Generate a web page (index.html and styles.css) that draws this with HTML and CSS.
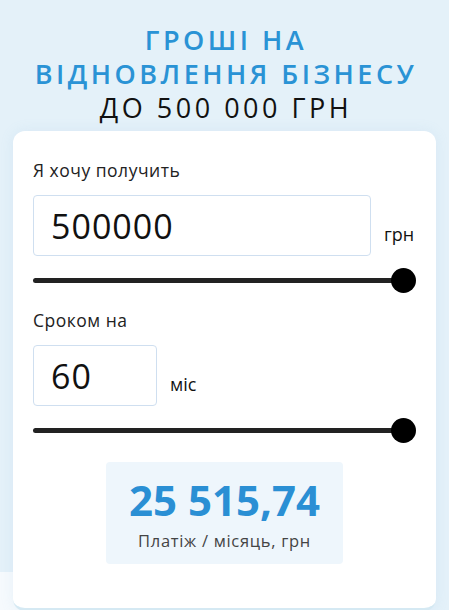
FILE: index.html
```html
<!DOCTYPE html>
<html lang="uk">
<head>
  <meta charset="UTF-8" />
  <meta name="viewport" content="width=device-width, initial-scale=1.0"/>
  <title>Гроші на відновлення бізнесу</title>
  <link rel="stylesheet" href="styles.css">
</head>
<body>
  <div class="page">
    <h1 class="title">
      <span class="accent">ГРОШІ НА<br>ВІДНОВЛЕННЯ БІЗНЕСУ</span><br>
      ДО 500 000 ГРН
    </h1>

    <div class="calc">
      <div class="label">Я хочу получить</div>
      <div class="field-row">
        <input class="field field-wide" type="text" value="500000">
        <span class="unit">грн</span>
      </div>
      <div class="slider"><span class="thumb"></span></div>

      <div class="label">Сроком на</div>
      <div class="field-row">
        <input class="field field-short" type="text" value="60">
        <span class="unit">міс</span>
      </div>
      <div class="slider slider-last"><span class="thumb"></span></div>

      <div class="result">
        <div class="sum">25 515,74</div>
        <div class="sum-note">Платіж / місяць, грн</div>
      </div>
    </div>
  </div>
</body>
</html>
```

FILE: styles.css
```css
body {
  margin: 0;
  font-family: 'Open Sans', 'Noto Sans', sans-serif;
  background: linear-gradient(#f6fafd, #f6fafd) no-repeat 0 572px / 50% 40px, #e4f1f9;
  color: #111;
  height: 610px;
  overflow: hidden;
}
.page {
  padding: 23px 13px 0;
}
.title {
  margin: 0 0 6px;
  padding-left: 3px;
  text-align: center;
  font-size: 27px;
  line-height: 34px;
  letter-spacing: 3.5px;
  font-weight: 400;
  color: #111;
}
.accent {
  color: #2a93d5;
  font-weight: 600;
}
.calc {
  background: #fff;
  border-radius: 12px;
  padding: 28px 20px 44px;
  border-bottom: 3px solid #d5e9f3;
  box-shadow: 0 0 14px rgba(120,170,210,0.12);
}
.label {
  font-size: 17.5px;
  line-height: 22px;
  letter-spacing: 0.5px;
  color: #222;
}
.field-row {
  display: flex;
  align-items: flex-end;
  margin-top: 14px;
}
.field {
  box-sizing: border-box;
  height: 61px;
  border: 1px solid #cfdff0;
  border-radius: 4px;
  padding: 0 17px;
  font-family: inherit;
  font-size: 34px;
  letter-spacing: 1px;
  color: #111;
  outline: none;
}
.field-wide {
  width: 338px;
}
.field-short {
  width: 124px;
}
.unit {
  font-size: 18px;
  margin: 0 0 10px 13px;
  color: #111;
}
.slider {
  position: relative;
  height: 5px;
  background: #222;
  border-radius: 3px;
  margin: 22px 12px 26px 0;
}
.slider-last {
  margin-bottom: 29px;
}
.thumb {
  position: absolute;
  right: -12px;
  top: -10px;
  width: 25px;
  height: 25px;
  border-radius: 50%;
  background: #000;
}
.result {
  width: 237px;
  height: 102px;
  box-sizing: border-box;
  margin: 0 auto;
  background: #eef6fc;
  border-radius: 4px;
  padding-top: 12px;
  text-align: center;
}
.sum {
  font-size: 42px;
  line-height: 52px;
  font-weight: 700;
  color: #2a8fd4;
}
.sum-note {
  font-size: 16.5px;
  line-height: 24px;
  letter-spacing: 0.7px;
  color: #444;
  margin-top: 3px;
}
```
